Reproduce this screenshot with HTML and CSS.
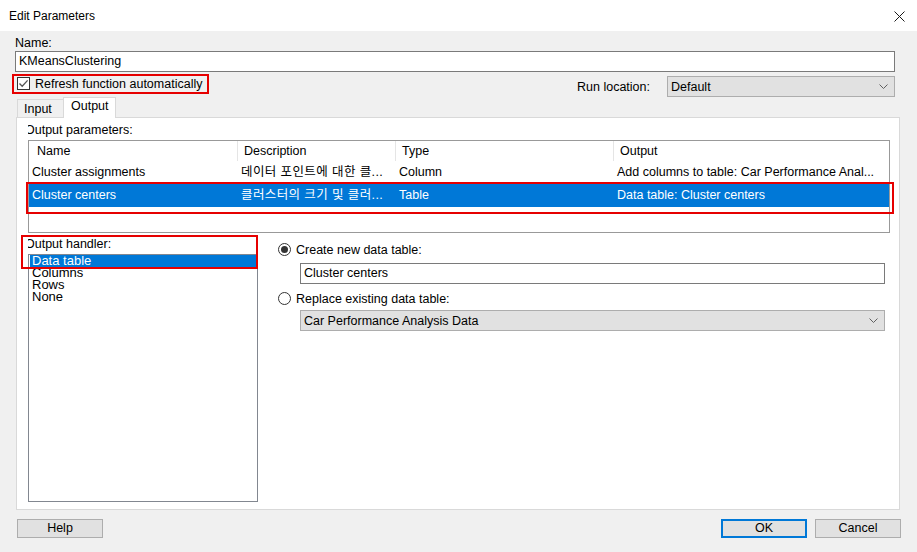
FILE: index.html
```html
<!DOCTYPE html>
<html>
<head>
<meta charset="utf-8">
<title>Edit Parameters</title>
<link rel="stylesheet" href="styles.css">
</head>
<body>
<div class="titlebar">
  <span class="title">Edit Parameters</span>
  <svg class="close" width="11" height="11" viewBox="0 0 11 11"><path d="M0.5 0.5L10.5 10.5M10.5 0.5L0.5 10.5" stroke="#1a1a1a" stroke-width="1"/></svg>
</div>
<div class="dialog">
  <div class="label name-label">Name:</div>
  <div class="textbox name-box">KMeansClustering</div>
  <div class="opts-row">
    <div class="check-wrap">
      <span class="checkbox"><svg width="11" height="11" viewBox="0 0 11 11"><path d="M1.5 5.5L4.2 8.3L9.6 2.4" fill="none" stroke="#555" stroke-width="1.3"/></svg></span>
      <span class="check-text">Refresh function automatically</span>
    </div>
    <div class="runloc">
      <span>Run location:</span>
      <div class="combo run-combo"><span>Default</span><svg class="chev" width="9" height="5" viewBox="0 0 9 5"><path d="M0.5 0.5L4.5 4.5L8.5 0.5" fill="none" stroke="#606060" stroke-width="1"/></svg></div>
    </div>
  </div>
  <div class="tabs">
    <div class="tab tab-input">Input</div>
    <div class="tab tab-output active">Output</div>
  </div>
  <div class="panel">
    <div class="clip params-label"><span>Output parameters:</span></div>
    <div class="listview">
      <div class="lv-row lv-head">
        <div class="cell c1">Name</div>
        <div class="cell c2">Description</div>
        <div class="cell c3">Type</div>
        <div class="cell c4">Output</div>
      </div>
      <div class="lv-row">
        <div class="cell c1">Cluster assignments</div>
        <div class="cell c2 ko">데이터 포인트에 대한 클...</div>
        <div class="cell c3">Column</div>
        <div class="cell c4">Add columns to table: Car Performance Anal...</div>
      </div>
      <div class="lv-row sel marked">
        <div class="cell c1">Cluster centers</div>
        <div class="cell c2 ko">클러스터의 크기 및 클러...</div>
        <div class="cell c3">Table</div>
        <div class="cell c4">Data table: Cluster centers</div>
      </div>
    </div>
    <div class="lower">
      <div class="handler">
        <div class="clip handler-label"><span>Output handler:</span></div>
        <div class="listbox">
          <div class="lb-item sel">Data table</div>
          <div class="lb-item">Columns</div>
          <div class="lb-item">Rows</div>
          <div class="lb-item">None</div>
        </div>
        <div class="mark-box"></div>
      </div>
      <div class="options">
        <div class="radio-row">
          <span class="radio checked"></span>
          <span>Create new data table:</span>
        </div>
        <div class="textbox opt-box">Cluster centers</div>
        <div class="radio-row radio-row2">
          <span class="radio"></span>
          <span>Replace existing data table:</span>
        </div>
        <div class="combo opt-combo"><span>Car Performance Analysis Data</span><svg class="chev" width="9" height="5" viewBox="0 0 9 5"><path d="M0.5 0.5L4.5 4.5L8.5 0.5" fill="none" stroke="#606060" stroke-width="1"/></svg></div>
      </div>
    </div>
  </div>
  <div class="buttons">
    <div class="btn help">Help</div>
    <div class="spacer"></div>
    <div class="btn ok">OK</div>
    <div class="btn cancel">Cancel</div>
  </div>
</div>
</body>
</html>
```
FILE: styles.css
```css
* { box-sizing: border-box; }
html, body { margin: 0; padding: 0; }
body {
  width: 917px;
  height: 552px;
  overflow: hidden;
  background: #f0f0f0;
  font-family: "Liberation Sans", "Noto Sans CJK KR", Arial, sans-serif;
  font-size: 12.5px;
  color: #000;
}
.titlebar {
  height: 31px;
  background: #fff;
  display: flex;
  align-items: center;
  justify-content: space-between;
  padding: 0 12px 0 9px;
}
.title { font-size: 12px; padding-top: 1px; }
.close { display: block; margin-top: 1px; }

.dialog { padding: 0 17px 0 15px; height: 521px; }
.label { line-height: 14px; }
.name-label { margin-top: 5px; height: 14px; }

.textbox {
  height: 21px;
  border: 1px solid #7a7a7a;
  background: #fff;
  line-height: 19px;
  padding-left: 3px;
  white-space: nowrap;
}
.name-box { margin-top: 1px; margin-right: 5px; }

.opts-row {
  margin-top: 2px;
  margin-right: 5px;
  height: 23px;
  display: flex;
  justify-content: space-between;
  align-items: flex-start;
}
.check-wrap {
  margin-left: -3px;
  width: 197px;
  height: 20px;
  border: 2px solid #e60000;
  display: flex;
  align-items: center;
  padding-left: 3px;
  gap: 5px;
}
.checkbox {
  width: 13px;
  height: 13px;
  border: 1px solid #333;
  background: #fff;
  display: flex;
  align-items: center;
  justify-content: center;
  margin-top: -1px;
}
.checkbox svg { display: block; }

.runloc {
  display: flex;
  align-items: center;
  gap: 17px;
  margin-top: 2px;
}
.combo {
  height: 21px;
  border: 1px solid #adadad;
  background: #e1e1e1;
  display: flex;
  align-items: center;
  justify-content: space-between;
  padding: 0 6px 0 3px;
  white-space: nowrap;
}
.chev { display: block; }
.run-combo { width: 228px; }

.tabs {
  height: 20px;
  display: flex;
  align-items: flex-end;
  padding-left: 2px;
}
.tab {
  height: 18px;
  border: 1px solid #d9d9d9;
  border-bottom: none;
  background: #f0f0f0;
  line-height: 18px;
  padding-left: 6px;
}
.tab-input { width: 47px; }
.tab-output { width: 53px; }
.tab.active {
  height: 21px;
  margin-bottom: -1px;
  margin-left: -1px;
  background: #fff;
  position: relative;
  z-index: 1;
  line-height: 17px;
  padding-left: 7px;
}

.panel {
  margin-left: 1px;
  height: 393px;
  border: 1px solid #d9d9d9;
  background: #fff;
  padding: 5px 9px 0 11px;
}
.clip { overflow: hidden; white-space: nowrap; line-height: 14px; }
.clip span { display: inline-block; margin-left: -3px; }
.params-label { height: 14px; }

.listview {
  margin-top: 3px;
  height: 93px;
  border: 1px solid #999;
  background: #fff;
}
.lv-row {
  display: flex;
  height: 23px;
  line-height: 23px;
  white-space: nowrap;
}
.lv-head { height: 20px; line-height: 20px; }
.cell { overflow: hidden; padding-left: 3px; }
.c1 { width: 209px; }
.c2 { width: 158px; }
.c3 { width: 218px; }
.c4 { flex: 1; }
.ko { letter-spacing: 0.4px; }
.lv-head .cell { border-right: 1px solid #e5e5e5; padding-left: 6px; }
.lv-head .c1 { padding-left: 8px; }
.lv-head .c4 { border-right: none; }
.lv-row.sel { background: #0078d7; color: #fff; }
.marked { position: relative; }
.marked::after {
  content: "";
  position: absolute;
  left: -3px;
  right: -5px;
  top: -2px;
  bottom: -7px;
  border: 2px solid #e60000;
}

.lower {
  margin-top: 4px;
  display: flex;
  gap: 20px;
}
.handler { width: 230px; position: relative; }
.handler-label { height: 17px; }
.listbox {
  height: 248px;
  border: 1px solid #828790;
  background: #fff;
  padding: 0 0 0 1px;
}
.lb-item {
  font-size: 13px;
  line-height: 12px;
  height: 12px;
  padding-left: 2px;
  white-space: nowrap;
}
.lb-item.sel { background: #0078d7; color: #fff; }
.mark-box {
  position: absolute;
  left: -7px;
  top: -2px;
  width: 237px;
  height: 34px;
  border: 2px solid #e60000;
}

.options { flex: 1; padding-top: 4px; }
.radio-row {
  height: 17px;
  display: flex;
  align-items: center;
  gap: 5px;
}
.radio-row2 { margin-top: 6px; }
.radio {
  width: 13px;
  height: 13px;
  border: 1px solid #333;
  border-radius: 50%;
  background: #fff;
  display: flex;
  align-items: center;
  justify-content: center;
}
.radio.checked::before {
  content: "";
  width: 7px;
  height: 7px;
  border-radius: 50%;
  background: #333;
}
.opt-box { margin-top: 5px; margin-left: 22px; width: 585px; }
.opt-combo { margin-top: 3px; margin-left: 22px; width: 585px; padding-right: 6px; }

.buttons {
  margin-top: 9px;
  height: 19px;
  display: flex;
}
.spacer { flex: 1; }
.btn {
  width: 86px;
  height: 19px;
  border: 1px solid #adadad;
  background: #e1e1e1;
  text-align: center;
  line-height: 17px;
}
.help { margin-left: 2px; }
.ok { border: 2px solid #0078d7; line-height: 15px; margin-right: 8px; }
.cancel { margin-right: -1px; }
```
